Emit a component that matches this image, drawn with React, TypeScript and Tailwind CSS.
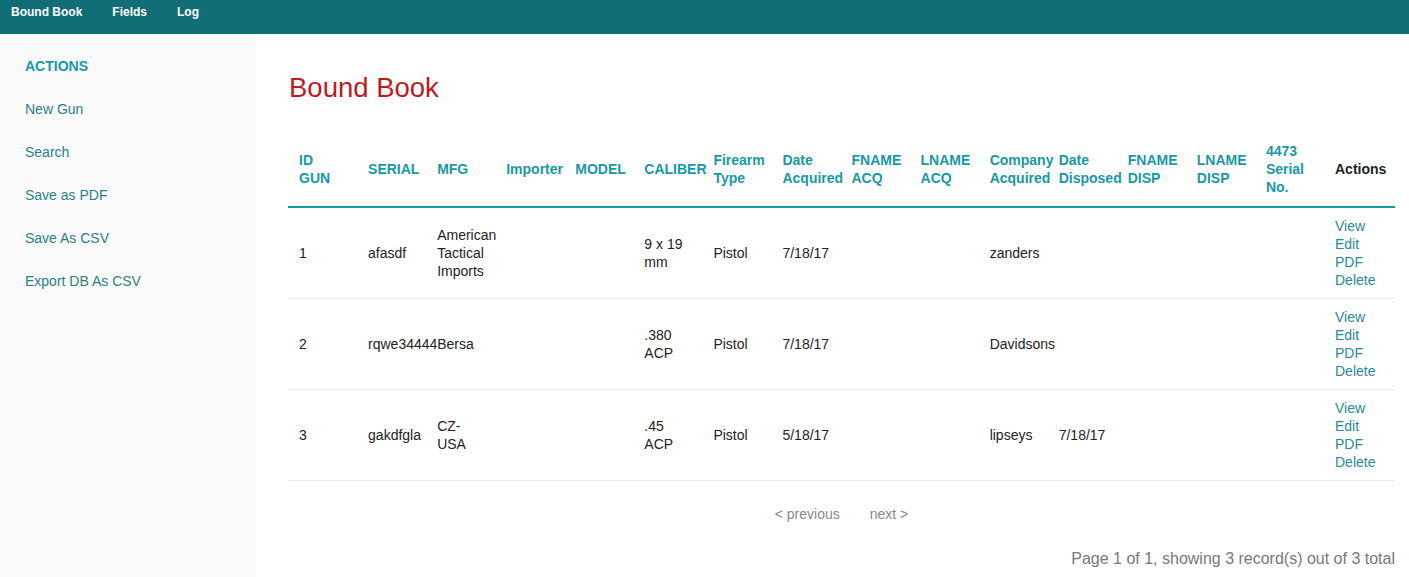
import React from 'react';

interface Gun {
  id: string;
  serial: string;
  mfg: string;
  importer: string;
  model: string;
  caliber: string;
  type: string;
  acquired: string;
  fnameAcq: string;
  lnameAcq: string;
  company: string;
  disposed: string;
  fnameDisp: string;
  lnameDisp: string;
  serial4473: string;
}

const columns = [
  'ID GUN',
  'SERIAL',
  'MFG',
  'Importer',
  'MODEL',
  'CALIBER',
  'Firearm Type',
  'Date Acquired',
  'FNAME ACQ',
  'LNAME ACQ',
  'Company Acquired',
  'Date Disposed',
  'FNAME DISP',
  'LNAME DISP',
  '4473 Serial No.',
];

const guns: Gun[] = [
  {
    id: '1', serial: 'afasdf', mfg: 'American Tactical Imports', importer: '', model: '',
    caliber: '9 x 19 mm', type: 'Pistol', acquired: '7/18/17', fnameAcq: '', lnameAcq: '',
    company: 'zanders', disposed: '', fnameDisp: '', lnameDisp: '', serial4473: '',
  },
  {
    id: '2', serial: 'rqwe34444', mfg: 'Bersa', importer: '', model: '',
    caliber: '.380 ACP', type: 'Pistol', acquired: '7/18/17', fnameAcq: '', lnameAcq: '',
    company: 'Davidsons', disposed: '', fnameDisp: '', lnameDisp: '', serial4473: '',
  },
  {
    id: '3', serial: 'gakdfgla', mfg: 'CZ-USA', importer: '', model: '',
    caliber: '.45 ACP', type: 'Pistol', acquired: '5/18/17', fnameAcq: '', lnameAcq: '',
    company: 'lipseys', disposed: '7/18/17', fnameDisp: '', lnameDisp: '', serial4473: '',
  },
];

const sideLinks = ['New Gun', 'Search', 'Save as PDF', 'Save As CSV', 'Export DB As CSV'];

const App = () => {
  return (
    <div className="min-h-screen flex flex-col bg-white font-['Liberation_Sans',Arial,sans-serif] text-[14px] leading-[18px] text-[#222]">
      {/* Top bar */}
      <nav className="h-[34px] bg-[#116d76] flex items-start gap-[30px] pl-[11px] pt-[4px] shrink-0">
        {['Bound Book', 'Fields', 'Log'].map((item) => (
          <a key={item} href="#" className="text-white font-bold text-[12px] leading-[16px]">
            {item}
          </a>
        ))}
      </nav>

      <div className="flex flex-1">
        {/* Sidebar */}
        <aside className="w-[256px] shrink-0 bg-[#fafafa] px-[25px] pt-[23px]">
          <ul className="flex flex-col gap-[25px]">
            <li className="font-bold text-[#1798a5]">ACTIONS</li>
            {sideLinks.map((link) => (
              <li key={link}>
                <a href="#" className="text-[#2a7f89]">
                  {link}
                </a>
              </li>
            ))}
          </ul>
        </aside>

        {/* Main content */}
        <main className="flex-1 min-w-0 pl-[32px] pr-[14px] pt-[37px]">
          <h3 className="text-[27.5px] leading-[33px] text-[#bd1c1c] pl-[1px]">Bound Book</h3>

          <table className="table-fixed w-full mt-[28px] border-collapse">
            <thead>
              <tr className="border-b-2 border-[#1798a5]">
                {columns.map((col) => (
                  <th
                    key={col}
                    className="text-left align-middle font-bold text-[#1798a5] pl-[11px] pr-[10px] py-[10px]"
                  >
                    {col}
                  </th>
                ))}
                <th className="w-[71px] text-left align-middle font-bold text-[#222] pl-[11px] pr-[10px] py-[10px]">
                  Actions
                </th>
              </tr>
            </thead>
            <tbody>
              {guns.map((g) => {
                const cells = [
                  g.id, g.serial, g.mfg, g.importer, g.model, g.caliber, g.type, g.acquired,
                  g.fnameAcq, g.lnameAcq, g.company, g.disposed, g.fnameDisp, g.lnameDisp, g.serial4473,
                ];
                return (
                  <tr key={g.id} className="border-b border-[#e8e8e8]">
                    {cells.map((c, i) => (
                      <td key={i} className="align-middle pl-[11px] pr-[10px] py-[9px]">
                        {c}
                      </td>
                    ))}
                    <td className="align-middle pl-[11px] pr-[10px] py-[9px]">
                      {['View', 'Edit', 'PDF', 'Delete'].map((a) => (
                        <a key={a} href="#" className="block text-[#2a8a94]">
                          {a}
                        </a>
                      ))}
                    </td>
                  </tr>
                );
              })}
            </tbody>
          </table>

          {/* Pagination */}
          <div className="mt-[24px] flex justify-center gap-[30px] text-[#888]">
            <a href="#">&lt; previous</a>
            <a href="#">next &gt;</a>
          </div>
          <p className="mt-[26px] text-right text-[16px] leading-[20px] text-[#777]">
            Page 1 of 1, showing 3 record(s) out of 3 total
          </p>
        </main>
      </div>
    </div>
  );
};

export default App;
